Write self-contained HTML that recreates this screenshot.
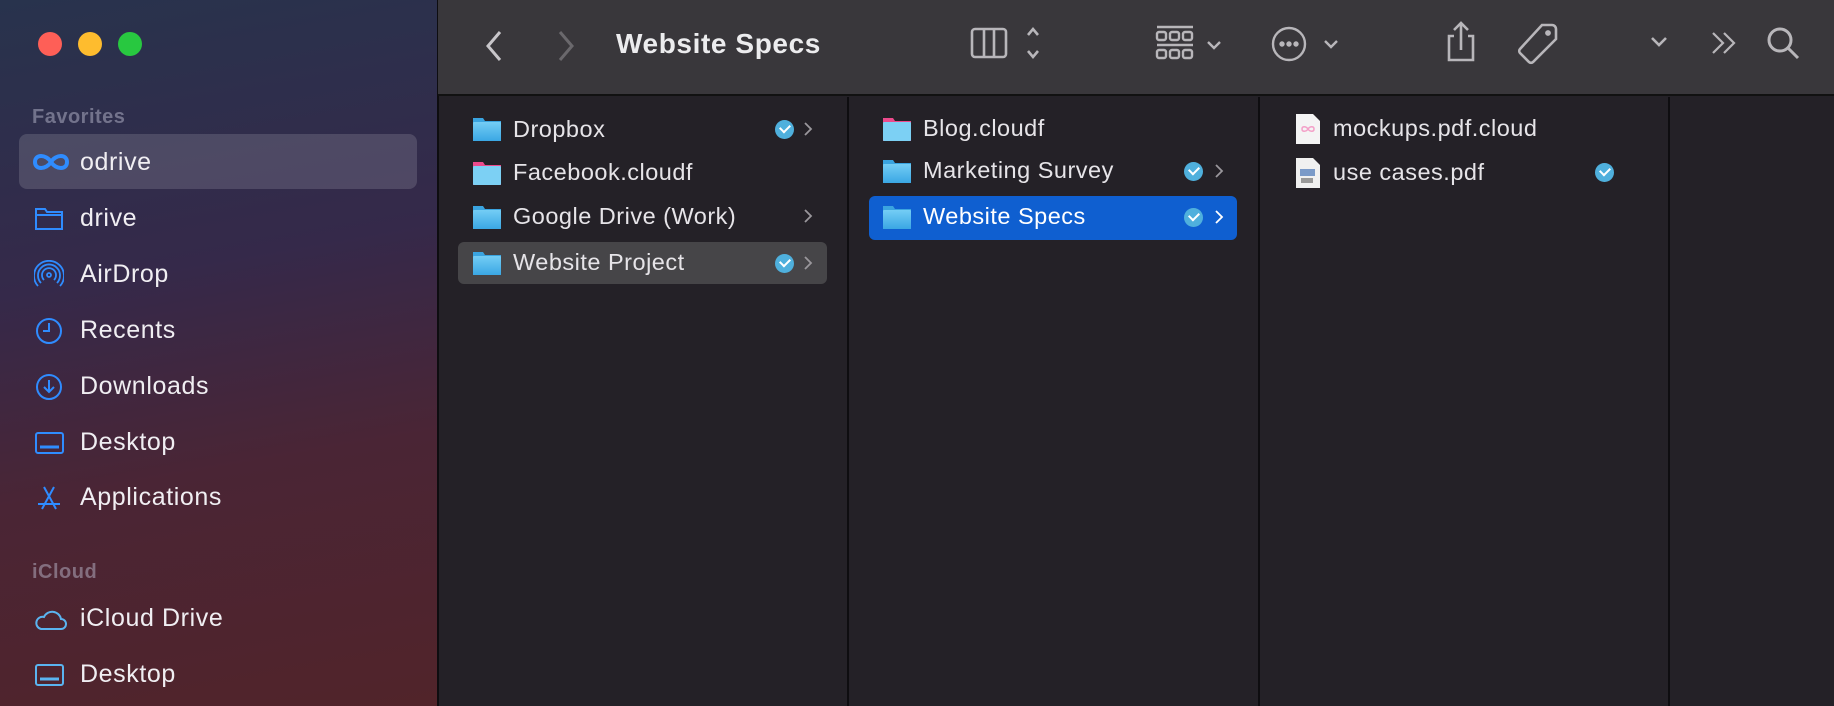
<!DOCTYPE html>
<html><head><meta charset="utf-8"><style>
*{margin:0;padding:0;box-sizing:border-box}
body{width:1834px;height:706px;overflow:hidden;background:#242127;font-family:"Liberation Sans",sans-serif;position:relative}
.a{position:absolute}
#side{left:0;top:0;width:437px;height:706px;background:linear-gradient(170deg,#28334d 0%,#35294a 38%,#4a2535 65%,#51242a 100%)}
.sec{color:rgba(200,200,220,.45);font-size:20px;font-weight:bold;left:32px;letter-spacing:0.5px}
.si{color:#f0eef2;font-size:25px;left:80px;line-height:1;letter-spacing:0.6px}
.ic{left:34px;width:30px;height:30px}
#tb{left:438px;top:0;width:1396px;height:96px;background:#39373b;border-bottom:2px solid #111}
.row{font-size:23.5px;color:#e6e4e8;line-height:1;letter-spacing:0.5px}
.chk{width:19px;height:19px;border-radius:50%;background:#4fb0dd}
.chk:after{content:"";position:absolute;left:5px;top:4px;width:8px;height:5px;border-left:2px solid #fff;border-bottom:2px solid #fff;transform:rotate(-45deg)}
.chev{width:10px;height:16px}
</style></head><body>
<svg width="0" height="0" style="position:absolute"><defs>
<linearGradient id="fg" x1="0" y1="0" x2="0" y2="1"><stop offset="0" stop-color="#74cdf5"/><stop offset="1" stop-color="#3aa7e4"/></linearGradient>
<symbol id="cv" viewBox="0 0 10 16"><path d="M2 2l6 6-6 6" fill="none" stroke="currentColor" stroke-width="1.8"/></symbol></defs></svg>
<div id="side" class="a">
 <div class="a" style="left:38px;top:32px;width:24px;height:24px;border-radius:50%;background:#fe5f57"></div>
 <div class="a" style="left:78px;top:32px;width:24px;height:24px;border-radius:50%;background:#febc2e"></div>
 <div class="a" style="left:118px;top:32px;width:24px;height:24px;border-radius:50%;background:#28c840"></div>
 <div class="a sec" style="top:106px">Favorites</div>
 <div class="a" style="left:19px;top:134px;width:398px;height:55px;border-radius:8px;background:rgba(255,255,255,.14)"></div>
 <svg class="a" style="left:30px;top:150px" width="42" height="24" viewBox="0 0 42 24"><path d="M21 12C16 4 5 4 5 12s11 8 16 0 16-8 16 0-11 8-16 0" fill="none" stroke="#2f8cff" stroke-width="4"/></svg>
 <div class="a si" style="top:150px">odrive</div>
 <svg class="a ic" style="top:204px" viewBox="0 0 30 30"><path d="M2 5h9l2 3h15v17H2z M2 11h26" fill="none" stroke="#2f8cff" stroke-width="2"/></svg>
 <div class="a si" style="top:206px">drive</div>
 <svg class="a ic" style="top:260px" viewBox="0 0 30 30" fill="none" stroke="#2f8cff" stroke-width="1.8"><circle cx="15" cy="15" r="2"/><path d="M10 20a7 7 0 1 1 10 0M7 23a11 11 0 1 1 16 0M4 26a15 15 0 1 1 22 0"/></svg>
 <div class="a si" style="top:262px">AirDrop</div>
 <svg class="a ic" style="top:316px" viewBox="0 0 30 30" fill="none" stroke="#2f8cff" stroke-width="2"><circle cx="15" cy="15" r="12"/><path d="M15 7v8H9"/></svg>
 <div class="a si" style="top:318px">Recents</div>
 <svg class="a ic" style="top:372px" viewBox="0 0 30 30" fill="none" stroke="#2f8cff" stroke-width="2"><circle cx="15" cy="15" r="12"/><path d="M15 8v12M10 15l5 5 5-5"/></svg>
 <div class="a si" style="top:374px">Downloads</div>
 <svg class="a ic" style="top:428px" viewBox="0 0 30 30" fill="none" stroke="#2f8cff" stroke-width="2"><rect x="2" y="5" width="27" height="20" rx="2"/><path d="M6 19h19" stroke-width="3"/></svg>
 <div class="a si" style="top:430px">Desktop</div>
 <svg class="a ic" style="top:484px" viewBox="0 0 30 30" fill="none" stroke="#2f8cff" stroke-width="2"><path d="M10 3l12 22M20 3L8 25M4 20h22"/></svg>
 <div class="a si" style="top:485px">Applications</div>
 <div class="a sec" style="top:561px">iCloud</div>
 <svg class="a ic" style="left:34px;top:604px;width:34px" viewBox="0 0 34 30" fill="none" stroke="#5ab4f0" stroke-width="2"><path d="M7 25h20a5 5 0 0 0 0-10 9 9 0 0 0-17-2 6 6 0 0 0-3 12z"/></svg>
 <div class="a si" style="top:606px">iCloud Drive</div>
 <svg class="a ic" style="top:660px" viewBox="0 0 30 30" fill="none" stroke="#5ab4f0" stroke-width="2"><rect x="2" y="5" width="27" height="20" rx="2"/><path d="M6 19h19" stroke-width="3"/></svg>
 <div class="a si" style="top:662px">Desktop</div>
</div>
<div class="a" style="left:437px;top:0;width:2px;height:706px;background:#0e0d10"></div>
<div id="tb" class="a">
 <svg class="a" style="left:44px;top:28px" width="24" height="36" viewBox="0 0 24 36" fill="none" stroke="#c8c6ca" stroke-width="3"><path d="M18 4L6 18l12 14"/></svg>
 <svg class="a" style="left:116px;top:28px" width="24" height="36" viewBox="0 0 24 36" fill="none" stroke="#6a686c" stroke-width="3"><path d="M6 4l12 14L6 32"/></svg>
 <div class="a" style="left:178px;top:28px;font-size:28px;font-weight:bold;color:#ececee;letter-spacing:0.6px">Website Specs</div>
 <svg class="a" style="left:532px;top:26px" width="80" height="36" viewBox="0 0 80 36" fill="none" stroke="#b8b6ba" stroke-width="2.6"><rect x="2" y="3" width="34" height="28" rx="3"/><path d="M14 3v28M24 3v28M58 9l5-6 5 6M58 25l5 6 5-6"/></svg>
 <svg class="a" style="left:716px;top:24px" width="80" height="40" viewBox="0 0 80 40" fill="none" stroke="#b8b6ba" stroke-width="2.4"><path d="M3 3h36M3 21h36"/><rect x="3" y="8" width="9" height="8" rx="2"/><rect x="16" y="8" width="9" height="8" rx="2"/><rect x="29" y="8" width="9" height="8" rx="2"/><rect x="3" y="26" width="9" height="8" rx="2"/><rect x="16" y="26" width="9" height="8" rx="2"/><rect x="29" y="26" width="9" height="8" rx="2"/><path d="M54 18l6 6 6-6"/></svg>
 <svg class="a" style="left:833px;top:24px" width="80" height="40" viewBox="0 0 80 40" fill="none" stroke="#b8b6ba" stroke-width="2.4"><circle cx="18" cy="20" r="16"/><circle cx="11" cy="20" r="1.5" fill="#b8b6ba"/><circle cx="18" cy="20" r="1.5" fill="#b8b6ba"/><circle cx="25" cy="20" r="1.5" fill="#b8b6ba"/><path d="M54 17l6 6 6-6"/></svg>
 <svg class="a" style="left:1005px;top:20px" width="36" height="44" viewBox="0 0 36 44" fill="none" stroke="#b8b6ba" stroke-width="2.6"><path d="M11 16H6v24h24V16h-5M18 30V4M11 10l7-7 7 7"/></svg>
 <svg class="a" style="left:1078px;top:22px" width="44" height="44" viewBox="0 0 44 44" fill="none" stroke="#b8b6ba" stroke-width="2.6"><path d="M26 3h10a4 4 0 0 1 4 4v10L17 40a3 3 0 0 1-4 0L4 31a3 3 0 0 1 0-4z"/><circle cx="32" cy="11" r="1.6" fill="#b8b6ba"/></svg>
 <svg class="a" style="left:1210px;top:34px" width="22" height="16" viewBox="0 0 22 16" fill="none" stroke="#b8b6ba" stroke-width="2.6"><path d="M4 4l7 7 7-7"/></svg>
 <svg class="a" style="left:1272px;top:30px" width="30" height="26" viewBox="0 0 30 26" fill="none" stroke="#b8b6ba" stroke-width="2.2"><path d="M3 3l10 10L3 23M14 3l10 10-10 10"/></svg>
 <svg class="a" style="left:1328px;top:26px" width="36" height="36" viewBox="0 0 36 36" fill="none" stroke="#b8b6ba" stroke-width="3"><circle cx="14" cy="14" r="11"/><path d="M22 22l10 10"/></svg>
</div>
<div class="a" style="left:847px;top:97px;width:2px;height:609px;background:#0e0d10"></div>
<div class="a" style="left:1258px;top:97px;width:2px;height:609px;background:#0e0d10"></div>
<div class="a" style="left:1668px;top:97px;width:2px;height:609px;background:#0e0d10"></div>

<!-- col1 -->
<div class="a" style="left:458px;top:242px;width:369px;height:42px;border-radius:6px;background:#464548"></div>
<svg class="a" style="left:472px;top:116px" width="30" height="26" viewBox="0 0 30 26"><path d="M1 2h10l2 3h16v20H1z" fill="#3aa4e0"/><rect x="1" y="6" width="28" height="19" rx="1" fill="url(#fg)"/></svg>
<div class="a row" style="left:513px;top:118px">Dropbox</div>
<div class="a chk" style="left:775px;top:120px"></div><svg class="a chev" style="left:803px;top:121px;color:#9a979c"><use href="#cv"/></svg>
<svg class="a" style="left:472px;top:160px" width="30" height="26" viewBox="0 0 30 26"><path d="M1 2h10l2 3h16v20H1z" fill="#ec4a8c"/><rect x="1" y="6" width="28" height="19" rx="1" fill="#7cd0f4"/></svg>
<div class="a row" style="left:513px;top:161px">Facebook.cloudf</div>
<svg class="a" style="left:472px;top:204px" width="30" height="26" viewBox="0 0 30 26"><path d="M1 2h10l2 3h16v20H1z" fill="#3aa4e0"/><rect x="1" y="6" width="28" height="19" rx="1" fill="url(#fg)"/></svg>
<div class="a row" style="left:513px;top:205px">Google Drive (Work)</div>
<svg class="a chev" style="left:803px;top:208px;color:#9a979c"><use href="#cv"/></svg>
<svg class="a" style="left:472px;top:250px" width="30" height="26" viewBox="0 0 30 26"><path d="M1 2h10l2 3h16v20H1z" fill="#3aa4e0"/><rect x="1" y="6" width="28" height="19" rx="1" fill="url(#fg)"/></svg>
<div class="a row" style="left:513px;top:251px">Website Project</div>
<div class="a chk" style="left:775px;top:254px"></div><svg class="a chev" style="left:803px;top:255px;color:#9a979c"><use href="#cv"/></svg>
<!-- col2 -->
<div class="a" style="left:869px;top:196px;width:368px;height:44px;border-radius:6px;background:#0f5fd0"></div>
<svg class="a" style="left:882px;top:116px" width="30" height="26" viewBox="0 0 30 26"><path d="M1 2h10l2 3h16v20H1z" fill="#ec4a8c"/><rect x="1" y="6" width="28" height="19" rx="1" fill="#7cd0f4"/></svg>
<div class="a row" style="left:923px;top:117px">Blog.cloudf</div>
<svg class="a" style="left:882px;top:158px" width="30" height="26" viewBox="0 0 30 26"><path d="M1 2h10l2 3h16v20H1z" fill="#3aa4e0"/><rect x="1" y="6" width="28" height="19" rx="1" fill="url(#fg)"/></svg>
<div class="a row" style="left:923px;top:159px">Marketing Survey</div>
<div class="a chk" style="left:1184px;top:162px"></div><svg class="a chev" style="left:1214px;top:163px;color:#9a979c"><use href="#cv"/></svg>
<svg class="a" style="left:882px;top:204px" width="30" height="26" viewBox="0 0 30 26"><path d="M1 2h10l2 3h16v20H1z" fill="#3aa4e0"/><rect x="1" y="6" width="28" height="19" rx="1" fill="url(#fg)"/></svg>
<div class="a row" style="left:923px;top:205px;color:#fff">Website Specs</div>
<div class="a chk" style="left:1184px;top:208px"></div><svg class="a chev" style="left:1214px;top:209px;color:#fff"><use href="#cv"/></svg>
<!-- col3 -->
<svg class="a" style="left:1295px;top:113px" width="26" height="32" viewBox="0 0 26 32"><path d="M1 1h17l7 7v23H1z" fill="#f4f4f4"/><path d="M13 16c-2-3-6-3-6 0s4 3 6 0 6-3 6 0-4 3-6 0" fill="none" stroke="#f3a0c8" stroke-width="1.5"/></svg>
<div class="a row" style="left:1333px;top:117px">mockups.pdf.cloud</div>
<svg class="a" style="left:1295px;top:157px" width="26" height="32" viewBox="0 0 26 32"><path d="M1 1h17l7 7v23H1z" fill="#f0f0f0"/><rect x="5" y="12" width="15" height="7" fill="#7a9ac8"/><rect x="6" y="21" width="12" height="5" fill="#999"/></svg>
<div class="a row" style="left:1333px;top:161px">use cases.pdf</div>
<div class="a chk" style="left:1595px;top:163px"></div>
</body></html>
